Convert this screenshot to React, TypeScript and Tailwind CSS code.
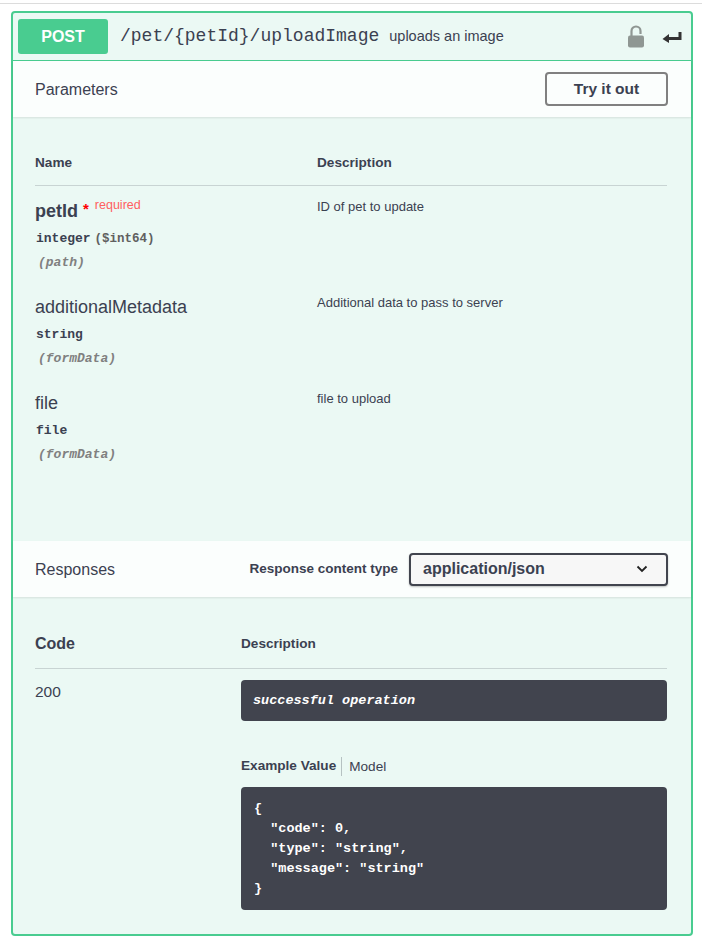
const sans = "font-['Liberation_Sans',Arial,sans-serif]";
const mono = "font-['Liberation_Mono','Courier_New',monospace]";

interface Param {
  name: string;
  required?: boolean;
  type: string;
  format?: string;
  location: string;
  description: string;
}

const params: Param[] = [
  { name: "petId", required: true, type: "integer", format: "($int64)", location: "(path)", description: "ID of pet to update" },
  { name: "additionalMetadata", type: "string", location: "(formData)", description: "Additional data to pass to server" },
  { name: "file", type: "file", location: "(formData)", description: "file to upload" },
];

const ParamRow = ({ param }: { param: Param }) => (
  <div className="flex h-[96px]">
    <div className="w-[282px] shrink-0">
      <div className="flex h-[28px] items-start">
        <span className={`text-[18px] leading-[28px] text-[#3b4151] ${param.required ? "font-bold" : ""}`}>{param.name}</span>
        {param.required && (
          <>
            <span className="ml-[5px] text-[15px] leading-[24px] font-bold text-[#ff0000]">*</span>
            <span className="ml-[6px] text-[12.500px] leading-[16px] text-[#ff6060]">required</span>
          </>
        )}
      </div>
      <div className={`${mono} mt-[4px] pl-[1px] text-[13px] leading-[20px] font-bold text-[#3b4151]`}>
        {param.type}
        {param.format && <span className="ml-[4px] text-[12.500px] text-[#606060]">{param.format}</span>}
      </div>
      <div className={`${mono} mt-[4px] pl-[3px] text-[13px] leading-[20px] font-bold text-[#808080] italic`}>{param.location}</div>
    </div>
    <div className="-mt-[1px] pt-[3px] text-[13px] leading-[16px] text-[#3b4151]">{param.description}</div>
  </div>
);

const App = () => (
  <div className={`${sans} relative h-[941px] w-[702px] overflow-hidden bg-white`}>
    <div className="h-[4px] border-b border-[#dcdcdc]" />
    <div className="mt-[7px] ml-[11px] h-[925px] w-[682px] rounded-[4px] border-2 border-[#49cc90] bg-[#ebf9f4]">
      {/* Summary */}
      <div className="flex h-[48px] items-center border-b border-[#49cc90] pr-[9px] pl-[5px]">
        <div className="flex h-[35px] w-[90px] items-center justify-center rounded-[3px] bg-[#49cc90] text-[16px] font-bold text-white">POST</div>
        <span className={`${mono} ml-[12px] text-[18px] text-[#3b4151]`}>/pet/&#123;petId&#125;/uploadImage</span>
        <span className="ml-[10px] text-[14.500px] text-[#3b4151]">uploads an image</span>
        <svg className="ml-auto" width="18" height="23" viewBox="0 0 18 23">
          <path d="M4.500 11V6a4.500 4.500 0 0 1 9 0v3" fill="none" stroke="#8f9793" strokeWidth="2.200" />
          <rect x="1" y="10.500" width="16" height="12" rx="2" fill="#8f9793" />
        </svg>
        <svg className="ml-[17px]" width="20" height="12" viewBox="0 0 20 12">
          <path d="M0.500 8 L7 3 V6 H16.500 V1 H19.500 V9 H7 V12 Z" fill="#333" />
        </svg>
      </div>

      {/* Parameters header */}
      <div className="flex h-[56px] items-center justify-between bg-white/80 pr-[23px] pl-[22px] shadow-[0_1px_2px_rgba(0,0,0,0.1)]">
        <span className="pt-[2px] text-[16px] text-[#3b4151]">Parameters</span>
        <div className="flex h-[34px] w-[123px] items-center justify-center rounded-[4px] border-2 border-[#808080] text-[15.500px] font-bold text-[#3b4151]">Try it out</div>
      </div>

      {/* Parameters table */}
      <div className="pt-[20px] pr-[24px] pl-[22px]">
        <div className="flex h-[49px] items-center border-b border-[#3b4151]/20 pt-[5px] text-[13.600px] font-bold text-[#3b4151]">
          <div className="w-[282px]">Name</div>
          <div>Description</div>
        </div>
        <div className="pt-[11px]">
          {params.map((p) => (
            <ParamRow key={p.name} param={p} />
          ))}
        </div>
      </div>

      {/* Responses header */}
      <div className="mt-[56px] flex h-[56px] items-center bg-white/80 pr-[23px] pl-[22px] shadow-[0_1px_2px_rgba(0,0,0,0.1)]">
        <span className="pt-[2px] text-[16px] text-[#3b4151]">Responses</span>
        <span className="mr-[11px] ml-auto text-[13.500px] font-bold text-[#3b4151]">Response content type</span>
        <div className="flex h-[33px] w-[259px] items-center justify-between rounded-[4px] border-2 border-[#41444e] bg-[#f7f7f7] pr-[18px] pl-[12px] text-[16px] font-bold text-[#3b4151] shadow-[0_1px_2px_rgba(0,0,0,0.25)]">
          application/json
          <svg width="12" height="8" viewBox="0 0 12 8">
            <path d="M1.500 1.500 L6 6 L10.500 1.500" fill="none" stroke="#222" strokeWidth="1.800" />
          </svg>
        </div>
      </div>

      {/* Responses table */}
      <div className="pt-[18px] pr-[24px] pl-[22px]">
        <div className="flex h-[54px] items-center border-b border-[#3b4151]/20 pt-[5px] text-[#3b4151]">
          <div className="w-[206px] text-[16px] font-bold">Code</div>
          <div className="text-[13.600px] font-bold">Description</div>
        </div>
        <div className="flex pt-[11px]">
          <div className="w-[206px] shrink-0 pt-[2px] text-[15.500px] leading-[20px] text-[#3b4151]">200</div>
          <div className="min-w-0 flex-1">
            <div className={`${mono} flex h-[41px] items-center rounded-[4px] bg-[#41444e] pt-[2px] pl-[12px] text-[13.500px] font-bold text-white italic`}>successful operation</div>
            <div className="mt-[36px] flex h-[19px] items-center text-[13.600px] text-[#3b4151]">
              <span className="font-bold">Example Value</span>
              <span className="ml-[5px] h-[19px] border-l border-[#3b4151]/30 pl-[7px] leading-[19px]">Model</span>
            </div>
            <pre className={`${mono} mt-[11px] h-[123px] rounded-[4px] bg-[#41444e] py-[12px] pl-[13px] text-[13.500px] leading-[20px] font-bold text-white`}>
              {`{
  "code": 0,
  "type": "string",
  "message": "string"
}`}
            </pre>
          </div>
        </div>
      </div>
    </div>
  </div>
);

export default App;
